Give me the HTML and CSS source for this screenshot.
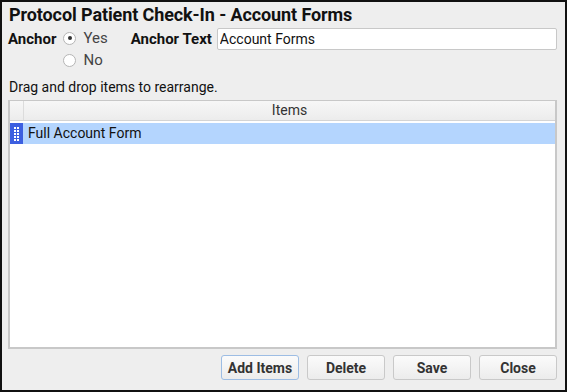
FILE: index.html
```html
<!DOCTYPE html>
<html lang="en">
<head>
    <meta charset="UTF-8">
    <title>Protocol Patient Check-In - Account Forms</title>
    <link rel="stylesheet" href="styles.css">
</head>
<body>
    <div class="dialog">
        <div class="title">Protocol Patient Check-In - Account Forms</div>
        <div class="anchor-row">
            <b class="lbl">Anchor</b>
            <div class="radios">
                <label class="radio"><span class="dot on"></span>Yes</label>
                <label class="radio"><span class="dot"></span>No</label>
            </div>
            <b class="lbl text-lbl">Anchor Text</b>
            <input type="text" class="anchor-text" value="Account Forms">
        </div>
        <div class="hint">Drag and drop items to rearrange.</div>
        <div class="grid">
            <div class="grid-head">
                <div class="handle-col"></div>
                <div class="head-cell">Items</div>
            </div>
            <div class="grid-row selected">
                <div class="handle-col">
                    <svg class="grip" width="5" height="14" viewBox="0 0 5 14" fill="#fff">
                        <rect x="0" y="0" width="2" height="2"/><rect x="3" y="0" width="2" height="2"/>
                        <rect x="0" y="3" width="2" height="2"/><rect x="3" y="3" width="2" height="2"/>
                        <rect x="0" y="6" width="2" height="2"/><rect x="3" y="6" width="2" height="2"/>
                        <rect x="0" y="9" width="2" height="2"/><rect x="3" y="9" width="2" height="2"/>
                        <rect x="0" y="12" width="2" height="2"/><rect x="3" y="12" width="2" height="2"/>
                    </svg>
                </div>
                <div class="cell">Full Account Form</div>
            </div>
        </div>
        <div class="buttons">
            <button type="button" class="btn default">Add Items</button>
            <button type="button" class="btn">Delete</button>
            <button type="button" class="btn">Save</button>
            <button type="button" class="btn">Close</button>
        </div>
    </div>
</body>
</html>
```

FILE: styles.css
```css
body{
    margin: 0;
}
body *{
    font-family: Roboto, "Liberation Sans", sans-serif;
    color: #111;
}
div.dialog{
    width: 567px;
    height: 392px;
    box-sizing: border-box;
    border: 2px solid #111;
    background-color: #eeeeee;
    padding: 2px 8px 0 6px;
    display: flex;
    flex-direction: column;
}
div.dialog div.title{
    font-size: 18px;
    font-weight: bold;
    height: 22px;
    line-height: 22px;
    margin-left: 1px;
    letter-spacing: -0.1px;
}
div.dialog div.anchor-row{
    display: flex;
    align-items: flex-start;
    margin-top: 1px;
    height: 47px;
}
div.dialog b.lbl{
    font-size: 15px;
    line-height: 22px;
    margin-top: 1px;
}
div.dialog b.text-lbl{
    margin-left: 23px;
}
div.dialog div.radios{
    display: flex;
    flex-direction: column;
    margin-left: 7px;
}
div.dialog label.radio{
    display: flex;
    align-items: center;
    height: 22px;
    font-size: 15px;
    color: #444;
}
div.dialog span.dot{
    width: 13px;
    height: 13px;
    border-radius: 50%;
    border: 1px solid #b5b5b5;
    background-color: white;
    margin-right: 7px;
    box-sizing: border-box;
    position: relative;
}
div.dialog span.dot.on::after{
    content: "";
    position: absolute;
    left: 3.5px;
    top: 3.5px;
    width: 4px;
    height: 4px;
    border-radius: 50%;
    background-color: #333;
}
div.dialog input.anchor-text{
    flex: 1;
    height: 22px;
    margin-left: 5px;
    margin-top: 1px;
    box-sizing: border-box;
    border: 1px solid #c8c8c8;
    border-radius: 2px;
    padding: 0 2px;
    font-size: 14px;
    background-color: white;
}
div.dialog div.hint{
    font-size: 14px;
    height: 18px;
    line-height: 18px;
    margin-left: 1px;
    margin-top: 4px;
}
div.dialog div.grid{
    margin-top: 4px;
    height: 249px;
    box-sizing: border-box;
    border: 1px solid #c8c8c8;
    border-width: 1px 2px 2px 2px;
    background-color: white;
}
div.grid div.grid-head{
    display: flex;
    height: 19px;
    background: linear-gradient(#f7f7f7, #ececec);
    border-bottom: 1px solid #d4d4d4;
}
div.grid div.handle-col{
    width: 13px;
    border-right: 1px solid #dcdcdc;
    flex-shrink: 0;
}
div.grid div.head-cell{
    flex: 1;
    text-align: center;
    font-size: 14px;
    line-height: 19px;
    color: #333;
}
div.grid div.grid-row{
    display: flex;
    height: 21px;
    margin-top: 2px;
}
div.grid div.grid-row.selected{
    background-color: #b4d5fe;
}
div.grid div.grid-row div.handle-col{
    background-color: #3c5fe0;
    border-right: 1px solid #b4d5fe;
    display: flex;
    justify-content: center;
    align-items: center;
}
div.grid svg.grip{
    display: block;
}
div.grid div.cell{
    font-size: 14px;
    line-height: 21px;
    padding-left: 4px;
}
div.dialog div.buttons{
    display: flex;
    justify-content: flex-end;
    gap: 8px;
    margin-top: 6px;
}
div.dialog button.btn{
    width: 78px;
    height: 25px;
    border: 1px solid #c9c9c9;
    border-radius: 3px;
    background: linear-gradient(#fbfbfb, #ececec);
    font-size: 14px;
    font-weight: bold;
    color: #333;
    padding: 0;
}
div.dialog button.btn.default{
    border-color: #9dbde4;
}
```
